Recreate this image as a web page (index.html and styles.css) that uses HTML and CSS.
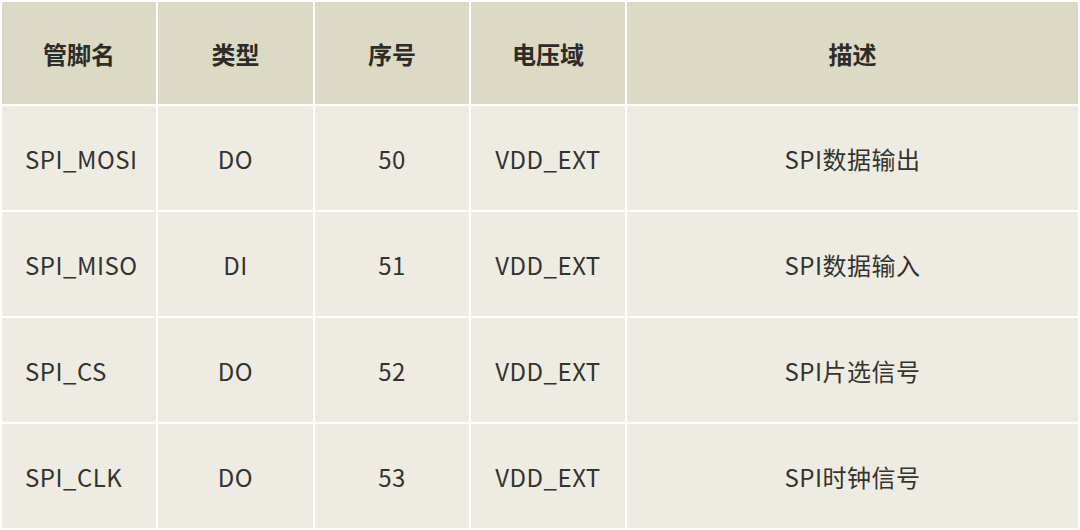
FILE: index.html
```html
<!DOCTYPE html>
<html lang="zh">
<head>
<meta charset="utf-8">
<link rel="stylesheet" href="styles.css">
</head>
<body>
<table class="pins">
  <thead>
    <tr>
      <th class="c1">管脚名</th>
      <th class="c2">类型</th>
      <th class="c3">序号</th>
      <th class="c4">电压域</th>
      <th class="c5">描述</th>
    </tr>
  </thead>
  <tbody>
    <tr><td class="name">SPI_MOSI</td><td>DO</td><td>50</td><td>VDD_EXT</td><td>SPI数据输出</td></tr>
    <tr><td class="name">SPI_MISO</td><td>DI</td><td>51</td><td>VDD_EXT</td><td>SPI数据输入</td></tr>
    <tr><td class="name">SPI_CS</td><td>DO</td><td>52</td><td>VDD_EXT</td><td>SPI片选信号</td></tr>
    <tr><td class="name">SPI_CLK</td><td>DO</td><td>53</td><td>VDD_EXT</td><td>SPI时钟信号</td></tr>
  </tbody>
</table>
</body>
</html>
```
FILE: styles.css
```css
html, body {
  margin: 0;
  padding: 0;
  background: #ffffff;
}
body {
  font-family: "Noto Sans CJK SC", "Noto Sans", sans-serif;
  color: #333330;
}
.pins {
  border-collapse: separate;
  border-spacing: 2px;
  width: 1080px;
  table-layout: fixed;
}
.pins th, .pins td {
  padding: 0;
  text-align: center;
  vertical-align: middle;
  font-size: 24px;
}
.pins th {
  height: 102px;
  background: #dcd9c4;
  font-weight: 700;
  color: #2c2c28;
}
.pins td {
  height: 104px;
  background: #eeece2;
  font-weight: 400;
  letter-spacing: 0.5px;
}
.pins td.name {
  text-align: left;
  padding-left: 23px;
}
.c1 { width: 154px; }
.c2 { width: 155px; }
.c3 { width: 154px; }
.c4 { width: 154px; }
.c5 { width: auto; }
```
